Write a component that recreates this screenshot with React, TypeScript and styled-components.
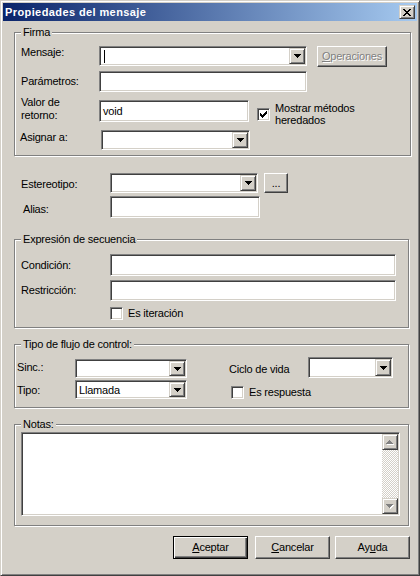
import React from "react";
import styled, { createGlobalStyle, css } from "styled-components";

const FACE = "#d4d0c8";
const HI = "#ffffff";
const SHADOW = "#808080";
const DARK = "#404040";

const GlobalStyle = createGlobalStyle`
  html, body {
    margin: 0;
    padding: 0;
    background: ${FACE};
  }
  body {
    font-family: "Liberation Sans", Arial, sans-serif;
    font-size: 11px;
    color: #000;
  }
  * {
    box-sizing: border-box;
  }
`;

const sunken = css`
  background: ${HI};
  border: 1px solid;
  border-color: ${SHADOW} ${HI} ${HI} ${SHADOW};
  box-shadow: inset 1px 1px 0 ${DARK}, inset -1px -1px 0 ${FACE};
`;

const raised = css`
  background: ${FACE};
  border: 1px solid;
  border-color: ${FACE} ${DARK} ${DARK} ${FACE};
  box-shadow: inset 1px 1px 0 ${HI}, inset -1px -1px 0 ${SHADOW};
`;

const Window = styled.div`
  width: 420px;
  height: 576px;
  background: ${FACE};
  border: 1px solid;
  border-color: ${FACE} ${DARK} ${DARK} ${FACE};
  box-shadow: inset 1px 1px 0 ${HI}, inset -1px -1px 0 ${SHADOW};
  padding: 2px;
  display: flex;
  flex-direction: column;
  letter-spacing: -0.2px;
`;

const TitleBar = styled.div`
  height: 18px;
  flex-shrink: 0;
  display: flex;
  align-items: center;
  justify-content: space-between;
  padding: 0 2px;
  background: linear-gradient(to right, #0a246a, #a6caf0);
`;

const Title = styled.span`
  color: #fff;
  font-weight: bold;
  font-size: 11px;
  letter-spacing: 0.4px;
  line-height: 18px;
`;

const CloseButton = styled.span`
  ${raised};
  width: 16px;
  height: 14px;
  display: grid;
  place-items: center;
`;

const Body = styled.div`
  display: flex;
  flex-direction: column;
  padding-left: 11px;
`;

const Group = styled.div<{ $w: number; $h: number; $mt: number }>`
  position: relative;
  width: ${(p) => p.$w}px;
  height: ${(p) => p.$h}px;
  margin-top: ${(p) => p.$mt}px;
  border: 1px solid ${SHADOW};
  box-shadow: inset 1px 1px 0 ${HI}, 1px 1px 0 ${HI};
  display: flex;
  flex-direction: column;
`;

const Legend = styled.span`
  position: absolute;
  top: -7px;
  left: 6px;
  padding: 0 2px;
  line-height: 13px;
  background: ${FACE};
`;

const Row = styled.div<{ $mt?: number; $ml?: number }>`
  display: flex;
  align-items: flex-start;
  margin-top: ${(p) => p.$mt ?? 0}px;
  margin-left: ${(p) => p.$ml ?? 0}px;
`;

const Col = styled.div<{ $ml: number }>`
  display: flex;
  flex-direction: column;
  margin-left: ${(p) => p.$ml}px;
`;

const Label = styled.span<{ $w: number; $dy?: number }>`
  width: ${(p) => p.$w}px;
  flex-shrink: 0;
  margin-top: ${(p) => p.$dy ?? 0}px;
  line-height: 13px;
  white-space: nowrap;
`;

const Field = styled.div<{ $w: number; $h: number }>`
  ${sunken};
  width: ${(p) => p.$w}px;
  height: ${(p) => p.$h}px;
  flex-shrink: 0;
  padding: 1px;
  display: flex;
  align-items: stretch;
`;

const FieldText = styled.span`
  flex: 1;
  display: flex;
  align-items: center;
  padding-left: 2px;
  white-space: nowrap;
  overflow: hidden;
`;

const Caret = styled.span`
  width: 1px;
  height: 13px;
  background: #000;
  margin-left: 1px;
`;

const DropButton = styled.span`
  ${raised};
  width: 16px;
  flex-shrink: 0;
  display: grid;
  place-items: center;
`;

const Button = styled.div<{ $w: number; $h: number; $ml?: number; $default?: boolean; $disabled?: boolean }>`
  width: ${(p) => p.$w}px;
  height: ${(p) => p.$h}px;
  margin-left: ${(p) => p.$ml ?? 0}px;
  flex-shrink: 0;
  background: ${FACE};
  display: flex;
  align-items: center;
  justify-content: center;
  white-space: nowrap;
  line-height: 13px;
  border: 1px solid;
  ${(p) =>
    p.$default
      ? css`
          border-color: #000;
          box-shadow: inset 1px 1px 0 ${HI}, inset -1px -1px 0 ${DARK}, inset -2px -2px 0 ${SHADOW};
        `
      : css`
          border-color: ${HI} ${DARK} ${DARK} ${HI};
          box-shadow: inset -1px -1px 0 ${SHADOW};
        `}
  ${(p) =>
    p.$disabled &&
    css`
      color: ${SHADOW};
      text-shadow: 1px 1px 0 ${HI};
    `}
`;

const Accel = styled.span`
  text-decoration: underline;
`;

const CheckRow = styled.div<{ $mt?: number; $ml?: number; $lh?: number }>`
  display: flex;
  align-items: center;
  gap: 5px;
  margin-top: ${(p) => p.$mt ?? 0}px;
  margin-left: ${(p) => p.$ml ?? 0}px;
  line-height: ${(p) => p.$lh ?? 13}px;
`;

const CheckBox = styled.span`
  ${sunken};
  width: 13px;
  height: 13px;
  flex-shrink: 0;
  display: grid;
  place-items: center;
`;

const NotesField = styled.div`
  ${sunken};
  width: 379px;
  height: 84px;
  margin: 7px 0 0 6px;
  padding: 1px;
  display: flex;
  justify-content: flex-end;
`;

const ScrollBar = styled.div`
  width: 16px;
  display: flex;
  flex-direction: column;
`;

const ScrollButton = styled.span`
  ${raised};
  height: 16px;
  flex-shrink: 0;
  display: grid;
  place-items: center;
`;

const ScrollTrack = styled.span`
  flex: 1;
  background-image: repeating-conic-gradient(${FACE} 0 25%, ${HI} 0 50%);
  background-size: 2px 2px;
`;

const ButtonBar = styled.div`
  display: flex;
  justify-content: flex-end;
  margin-top: 10px;
  padding-right: 7px;
`;

const ArrowDown = () => (
  <svg width="7" height="4" viewBox="0 0 7 4" shapeRendering="crispEdges">
    <path d="M0 0h7v1H0zM1 1h5v1H1zM2 2h3v1H2zM3 3h1v1H3z" fill="#000" />
  </svg>
);

const GreyArrow = ({ up }: { up?: boolean }) => {
  const d = up
    ? "M3 0h1v1H3zM2 1h3v1H2zM1 2h5v1H1zM0 3h7v1H0z"
    : "M0 0h7v1H0zM1 1h5v1H1zM2 2h3v1H2zM3 3h1v1H3z";
  return (
    <svg width="8" height="5" viewBox="0 0 8 5" shapeRendering="crispEdges">
      <path d={d} fill={HI} transform="translate(1 1)" />
      <path d={d} fill={SHADOW} />
    </svg>
  );
};

const CheckMark = () => (
  <svg width="7" height="7" viewBox="0 0 7 7" shapeRendering="crispEdges">
    <path
      d="M6 0h1v1H6zM5 1h2v1H5zM0 2h1v1H0zM4 2h3v1H4zM0 3h2v1H0zM3 3h3v1H3zM0 4h5v1H0zM1 5h3v1H1zM2 6h1v1H2z"
      fill="#000"
    />
  </svg>
);

const CloseGlyph = () => (
  <svg width="8" height="7" viewBox="0 0 8 7" shapeRendering="crispEdges">
    <path
      d="M0 0h2v1H0zM6 0h2v1H6zM1 1h2v1H1zM5 1h2v1H5zM2 2h4v1H2zM3 3h2v1H3zM2 4h4v1H2zM1 5h2v1H1zM5 5h2v1H5zM0 6h2v1H0zM6 6h2v1H6z"
      fill="#000"
    />
  </svg>
);

type ComboProps = { w: number; h?: number; value?: string; caret?: boolean };

const Combo = ({ w, h = 20, value, caret }: ComboProps) => (
  <Field $w={w} $h={h}>
    <FieldText>
      {caret && <Caret />}
      {value}
    </FieldText>
    <DropButton>
      <ArrowDown />
    </DropButton>
  </Field>
);

const TextBox = ({ w, h = 21, value }: ComboProps) => (
  <Field $w={w} $h={h}>
    <FieldText>{value}</FieldText>
  </Field>
);

const Check = ({ checked, children, ...rest }: { checked?: boolean; children: React.ReactNode; $mt?: number; $ml?: number; $lh?: number }) => (
  <CheckRow {...rest}>
    <CheckBox>{checked && <CheckMark />}</CheckBox>
    <span>{children}</span>
  </CheckRow>
);

export default function App() {
  return (
    <>
      <GlobalStyle />
      <Window>
        <TitleBar>
          <Title>Propiedades del mensaje</Title>
          <CloseButton>
            <CloseGlyph />
          </CloseButton>
        </TitleBar>

        <Body>
          <Group $w={397} $h={124} $mt={11}>
            <Legend>Firma</Legend>
            <Row $mt={13} $ml={6}>
              <Label $w={78}>Mensaje:</Label>
              <Combo w={208} caret />
              <Button $w={70} $h={21} $ml={10} $disabled>
                <Accel>O</Accel>peraciones
              </Button>
            </Row>
            <Row $mt={4} $ml={6}>
              <Label $w={78} $dy={4}>
                Parámetros:
              </Label>
              <TextBox w={208} />
            </Row>
            <Row $mt={8} $ml={6}>
              <Label $w={78} $dy={-4}>
                Valor de
                <br />
                retorno:
              </Label>
              <TextBox w={150} h={22} value="void" />
              <Check checked $mt={2} $ml={8} $lh={12}>
                Mostrar métodos
                <br />
                heredados
              </Check>
            </Row>
            <Row $mt={4} $ml={5}>
              <Label $w={81} $dy={1}>
                Asignar a:
              </Label>
              <Combo w={149} />
            </Row>
          </Group>

          <Row $mt={17} $ml={7}>
            <Label $w={89} $dy={5}>
              Estereotipo:
            </Label>
            <Combo w={148} />
            <Button $w={24} $h={20} $ml={6}>
              ...
            </Button>
          </Row>
          <Row $mt={3} $ml={9}>
            <Label $w={87} $dy={7}>
              Alias:
            </Label>
            <TextBox w={150} h={22} />
          </Row>

          <Group $w={395} $h={89} $mt={21}>
            <Legend>Expresión de secuencia</Legend>
            <Row $mt={14} $ml={6}>
              <Label $w={89} $dy={5}>
                Condición:
              </Label>
              <TextBox w={286} h={22} />
            </Row>
            <Row $mt={4} $ml={6}>
              <Label $w={89} $dy={4}>
                Restricción:
              </Label>
              <TextBox w={286} />
            </Row>
            <Check $mt={6} $ml={95}>
              Es iteración
            </Check>
          </Group>

          <Group $w={395} $h={64} $mt={16}>
            <Legend>Tipo de flujo de control:</Legend>
            <Row>
              <Col $ml={2}>
                <Row $mt={14}>
                  <Label $w={58} $dy={2}>
                    Sinc.:
                  </Label>
                  <Combo w={112} h={19} />
                </Row>
                <Row $mt={2}>
                  <Label $w={58} $dy={4}>
                    Tipo:
                  </Label>
                  <Combo w={112} h={19} value="Llamada" />
                </Row>
              </Col>
              <Col $ml={42}>
                <Row $mt={12}>
                  <Label $w={79} $dy={6}>
                    Ciclo de vida
                  </Label>
                  <Combo w={85} h={21} />
                </Row>
                <Check $mt={8} $ml={2}>
                  Es respuesta
                </Check>
              </Col>
            </Row>
          </Group>

          <Group $w={395} $h={102} $mt={16}>
            <Legend>Notas:</Legend>
            <NotesField>
              <ScrollBar>
                <ScrollButton>
                  <GreyArrow up />
                </ScrollButton>
                <ScrollTrack />
                <ScrollButton>
                  <GreyArrow />
                </ScrollButton>
              </ScrollBar>
            </NotesField>
          </Group>

          <ButtonBar>
            <Button $w={75} $h={23} $default>
              <Accel>A</Accel>ceptar
            </Button>
            <Button $w={75} $h={23} $ml={7}>
              <Accel>C</Accel>ancelar
            </Button>
            <Button $w={75} $h={23} $ml={5}>
              Ay<Accel>u</Accel>da
            </Button>
          </ButtonBar>
        </Body>
      </Window>
    </>
  );
}
